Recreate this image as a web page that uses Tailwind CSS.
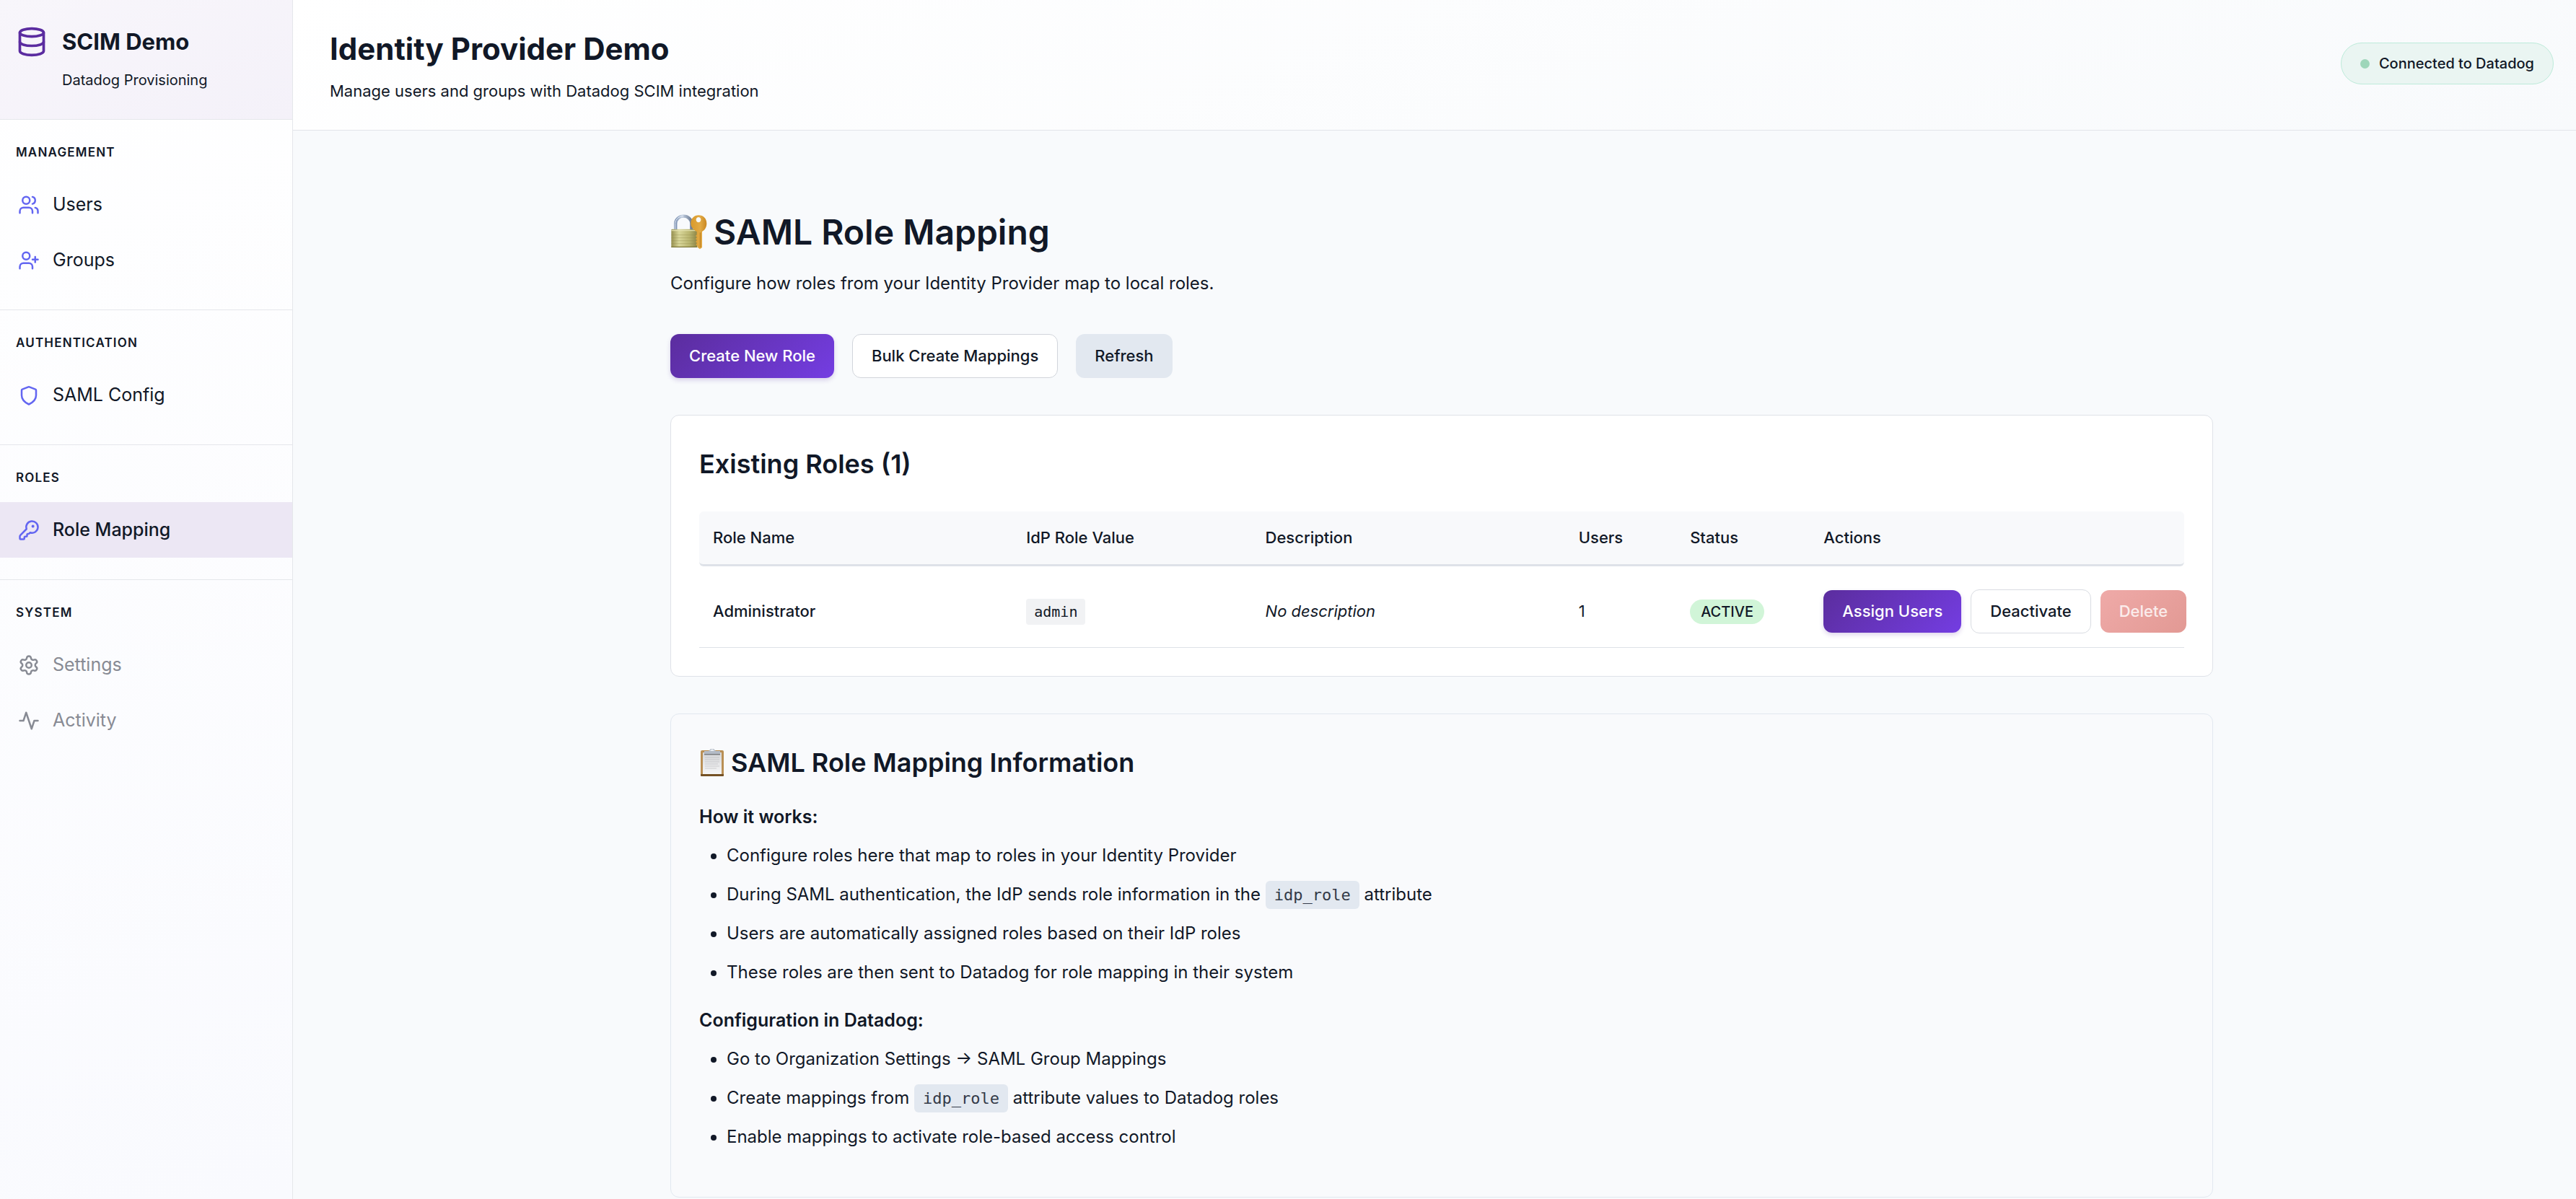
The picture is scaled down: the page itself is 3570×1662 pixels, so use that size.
<!DOCTYPE html>
<html lang="en">
<head>
<meta charset="utf-8">
<meta name="viewport" content="width=device-width, initial-scale=1">
<title>Identity Provider Demo</title>
<script src="https://cdn.jsdelivr.net/npm/@tailwindcss/browser@4"></script>
</head>
<body class="flex min-h-screen bg-[#f8fafc] font-[Inter,sans-serif] text-2xl text-[#111827]">

<aside class="w-[406px] shrink-0 border-r border-[#e5e7eb] bg-linear-160 from-white to-[#f9fafe]">
  <div class="grid grid-cols-[44px_1fr] gap-x-5 border-b border-[#e5e7eb] bg-linear-160 from-[#f8f6fb] to-[#f4f1f9] px-[22px] pt-9 pb-10">
    <svg class="size-11 text-[#5b2ca0]" viewBox="0 0 24 24" fill="none" stroke="currentColor" stroke-width="2" stroke-linecap="round" stroke-linejoin="round" aria-hidden="true"><ellipse cx="12" cy="5" rx="9" ry="3"/><path d="M3 5v14a9 3 0 0 0 18 0V5"/><path d="M3 12a9 3 0 0 0 18 0"/></svg>
    <div class="text-[31px] leading-[44px] font-bold">SCIM Demo</div>
    <div class="col-start-2 mt-[17px] text-xl">Datadog Provisioning</div>
  </div>

  <nav class="text-[25px]">
    <section class="border-b border-[#e5e7eb] pt-8 pb-[30px]">
      <h2 class="mb-[21px] px-[22px] text-[17px] leading-[26px] font-semibold tracking-[0.07em]">MANAGEMENT</h2>
      <a href="#users" class="flex h-[77px] items-center gap-[18px] px-[25px]">
        <svg class="size-[30px] text-[#6366f1]" viewBox="0 0 24 24" fill="none" stroke="currentColor" stroke-width="2" stroke-linecap="round" stroke-linejoin="round" aria-hidden="true"><path d="M16 21v-2a4 4 0 0 0-4-4H6a4 4 0 0 0-4 4v2"/><circle cx="9" cy="7" r="4"/><path d="M22 21v-2a4 4 0 0 0-3-3.87"/><path d="M16 3.13a4 4 0 0 1 0 7.75"/></svg>
        Users
      </a>
      <a href="#groups" class="flex h-[77px] items-center gap-[18px] px-[25px]">
        <svg class="size-[30px] text-[#6366f1]" viewBox="0 0 24 24" fill="none" stroke="currentColor" stroke-width="2" stroke-linecap="round" stroke-linejoin="round" aria-hidden="true"><path d="M16 21v-2a4 4 0 0 0-4-4H6a4 4 0 0 0-4 4v2"/><circle cx="9" cy="7" r="4"/><path d="M19 8v6"/><path d="M22 11h-6"/></svg>
        Groups
      </a>
    </section>

    <section class="border-b border-[#e5e7eb] pt-8 pb-[30px]">
      <h2 class="mb-[21px] px-[22px] text-[17px] leading-[26px] font-semibold tracking-[0.07em]">AUTHENTICATION</h2>
      <a href="#saml" class="flex h-[77px] items-center gap-[18px] px-[25px]">
        <svg class="size-[30px] text-[#6366f1]" viewBox="0 0 24 24" fill="none" stroke="currentColor" stroke-width="2" stroke-linecap="round" stroke-linejoin="round" aria-hidden="true"><path d="M20 12c0 5-3.8 8-8 10-4.200-2-8-5-8-10V6.300a1 1 0 0 1 .75-.97l6.700-2.650a1.500 1.500 0 0 1 1.100 0l6.700 2.650a1 1 0 0 1 .75.97z"/></svg>
        SAML Config
      </a>
    </section>

    <section class="border-b border-[#e5e7eb] pt-8 pb-[30px]">
      <h2 class="mb-[21px] px-[22px] text-[17px] leading-[26px] font-semibold tracking-[0.07em]">ROLES</h2>
      <a href="#roles" aria-current="page" class="flex h-[77px] items-center gap-[18px] bg-[#ece7f4] px-[25px] font-medium">
        <svg class="size-[30px] text-[#6366f1]" viewBox="0 0 24 24" fill="none" stroke="currentColor" stroke-width="2" stroke-linecap="round" stroke-linejoin="round" aria-hidden="true"><path d="M2.586 17.414A2 2 0 0 0 2 18.828V21a1 1 0 0 0 1 1h3a1 1 0 0 0 1-1v-1a1 1 0 0 1 1-1h1a1 1 0 0 0 1-1v-1a1 1 0 0 1 1-1h.172a2 2 0 0 0 1.414-.586l.814-.814a6.500 6.500 0 1 0-4-4z"/><circle cx="16.500" cy="7.500" r=".6" fill="currentColor"/></svg>
        Role Mapping
      </a>
    </section>

    <section class="pt-8 pb-[30px]">
      <h2 class="mb-[21px] px-[22px] text-[17px] leading-[26px] font-semibold tracking-[0.07em]">SYSTEM</h2>
      <a href="#settings" class="flex h-[77px] items-center gap-[18px] px-[25px] text-[#888b94]">
        <svg class="size-[30px]" viewBox="0 0 24 24" fill="none" stroke="currentColor" stroke-width="2" stroke-linecap="round" stroke-linejoin="round" aria-hidden="true"><path d="M9.671 4.136a2.340 2.340 0 0 1 4.659 0 2.340 2.340 0 0 0 3.319 1.915 2.340 2.340 0 0 1 2.330 4.033 2.340 2.340 0 0 0 0 3.831 2.340 2.340 0 0 1-2.330 4.033 2.340 2.340 0 0 0-3.319 1.915 2.340 2.340 0 0 1-4.659 0 2.340 2.340 0 0 0-3.320-1.915 2.340 2.340 0 0 1-2.330-4.033 2.340 2.340 0 0 0 0-3.831A2.340 2.340 0 0 1 6.350 6.051a2.340 2.340 0 0 0 3.319-1.915"/><circle cx="12" cy="12" r="3"/></svg>
        Settings
      </a>
      <a href="#activity" class="flex h-[77px] items-center gap-[18px] px-[25px] text-[#888b94]">
        <svg class="size-[30px]" viewBox="0 0 24 24" fill="none" stroke="currentColor" stroke-width="2" stroke-linecap="round" stroke-linejoin="round" aria-hidden="true"><path d="M22 12h-4l-3 9L9 3l-3 9H2"/></svg>
        Activity
      </a>
    </section>
  </nav>
</aside>

<div class="min-w-0 flex-1">
  <header class="flex items-center justify-between border-b border-[#e2e4ea] bg-linear-160 from-white to-[#f8fafc] pr-[31px] pl-[51px]">
    <div class="pt-10 pb-9">
      <h1 class="text-[42px] leading-[56px] font-bold">Identity Provider Demo</h1>
      <p class="mt-3 text-[22px] leading-9">Manage users and groups with Datadog SCIM integration</p>
    </div>
    <div class="mb-1 flex h-[58px] items-center gap-[13px] rounded-full border border-[#bdebda] bg-[#eaf5f2] px-[26px] text-xl font-medium">
      <span class="size-[13px] rounded-full bg-[#9ed6ba]"></span>
      Connected to Datadog
    </div>
  </header>

  <main class="mx-auto box-content max-w-[2138px] pt-[111px] pl-[20px]">
    <h2 class="flex items-center gap-2 text-5xl leading-[60px] font-semibold">
      <svg class="h-[50px] w-[52px]" viewBox="0 0 156 150" role="img" aria-label="Locked with key">
        <defs>
          <linearGradient id="brass" x1="0" x2="1"><stop offset="0" stop-color="#96904f"/><stop offset=".3" stop-color="#d9d79a"/><stop offset=".7" stop-color="#b9b56f"/><stop offset="1" stop-color="#8d8546"/></linearGradient>
          <linearGradient id="steel" x1="0" x2="1"><stop offset="0" stop-color="#7f94b4"/><stop offset=".4" stop-color="#c3d0e2"/><stop offset="1" stop-color="#6d7c94"/></linearGradient>
          <linearGradient id="gold" x1="0" x2="1"><stop offset="0" stop-color="#d99a2b"/><stop offset=".6" stop-color="#e2aa45"/><stop offset="1" stop-color="#c98722"/></linearGradient>
        </defs>
        <path d="M22 64V38a33 30 0 0 1 66 0v26" fill="none" stroke="url(#steel)" stroke-width="13"/>
        <path d="M20 64V38a35 32 0 0 1 35-31" fill="none" stroke="#e3eaf4" stroke-width="3"/>
        <rect x="4" y="62" width="108" height="76" rx="3" fill="url(#brass)"/>
        <path d="M4 68h108" stroke="#e8e6b8" stroke-width="3"/>
        <path d="M4 86h108M4 98h108M4 110h108M4 122h108" stroke="#8f8a4a" stroke-opacity=".35" stroke-width="3"/>
        <path d="M4 136h108" stroke="#7f7838" stroke-width="4"/>
        <path fill-rule="evenodd" fill="url(#gold)" d="M118 4c19 0 33 14 33 34 0 14-6 27-19 34v66l-9 7-9-7-2-7-6-5 5-6-6-6 6-6-6-6 6-6-6-6 5-5V72c-13-7-25-19-25-34C85 18 99 4 118 4zm-1 8a10 11 0 1 0 .1 0z"/>
        <path d="M124 76v62" stroke="#b87718" stroke-width="3"/>
      </svg>
      SAML Role Mapping
    </h2>
    <p class="mt-[21px] leading-10">Configure how roles from your Identity Provider map to local roles.</p>

    <div class="mt-[50px] flex gap-[25px] text-[22px] leading-[33px] font-medium">
      <button type="button" class="h-[61px] rounded-xl bg-linear-135 from-[#5b2d9e] to-[#743de2] px-[26px] text-white shadow-[0_3px_6px_rgba(91,45,158,0.2)]">Create New Role</button>
      <button type="button" class="h-[61px] rounded-xl border border-[#d1d5db] bg-white px-[26px]">Bulk Create Mappings</button>
      <button type="button" class="h-[61px] rounded-xl bg-[#e2e8f0] px-[26px]">Refresh</button>
    </div>

    <section class="mt-[51px] rounded-xl border border-[#dfe2e8] bg-white p-[39px]">
      <h3 class="mb-[38px] text-4xl leading-[56px] font-semibold">Existing Roles (1)</h3>
      <table class="w-full table-fixed border-separate border-spacing-0 text-left text-[22px] leading-[33px]">
        <colgroup>
          <col class="w-[21.1%]"><col class="w-[16.1%]"><col class="w-[21.1%]"><col class="w-[7.5%]"><col class="w-[9%]"><col>
        </colgroup>
        <thead>
          <tr class="h-[76px]">
            <th scope="col" class="rounded-l-md border-b-3 border-[#dee2e8] bg-[#f8f9fb] px-[19px] font-medium">Role Name</th>
            <th scope="col" class="border-b-3 border-[#dee2e8] bg-[#f8f9fb] px-[19px] font-medium">IdP Role Value</th>
            <th scope="col" class="border-b-3 border-[#dee2e8] bg-[#f8f9fb] px-[19px] font-medium">Description</th>
            <th scope="col" class="border-b-3 border-[#dee2e8] bg-[#f8f9fb] px-[19px] font-medium">Users</th>
            <th scope="col" class="border-b-3 border-[#dee2e8] bg-[#f8f9fb] px-[19px] font-medium">Status</th>
            <th scope="col" class="rounded-r-md border-b-3 border-[#dee2e8] bg-[#f8f9fb] px-[19px] font-medium">Actions</th>
          </tr>
        </thead>
        <tbody>
          <tr class="h-[113px]">
            <td class="border-b border-[#dee2e8] px-[19px] pt-3 font-medium">Administrator</td>
            <td class="border-b border-[#dee2e8] px-[19px] pt-3"><code class="rounded-sm bg-[#f1f2f4] px-[11px] py-[6px] font-['DejaVu_Sans_Mono',monospace] text-xl leading-none">admin</code></td>
            <td class="border-b border-[#dee2e8] px-[19px] pt-3 italic">No description</td>
            <td class="border-b border-[#dee2e8] px-[19px] pt-3">1</td>
            <td class="border-b border-[#dee2e8] px-[19px] pt-3"><span class="inline-block rounded-full bg-[#d1f5d8] px-[15px] py-px align-middle text-xl leading-8 font-medium">ACTIVE</span></td>
            <td class="border-b border-[#dee2e8] pt-3 pl-[19px]">
              <div class="flex items-center gap-[13px] font-medium">
                <button type="button" class="h-[59px] shrink-0 rounded-xl bg-linear-135 from-[#5b2d9e] to-[#743de2] px-[26px] text-white shadow-[0_3px_6px_rgba(91,45,158,0.2)]">Assign Users</button>
                <button type="button" class="h-[61px] shrink-0 rounded-xl border border-[#d9dce2] bg-white px-[26px]">Deactivate</button>
                <button type="button" disabled class="h-[59px] shrink-0 rounded-xl bg-linear-135 from-[#efaaa8] to-[#e29994] px-[26px] text-white/80">Delete</button>
              </div>
            </td>
          </tr>
        </tbody>
      </table>
    </section>

    <section class="mt-[51px] rounded-xl border border-[#e2e8f0] bg-[#f9fafc] px-[39px] pt-[39px] pb-14 leading-[54px]">
      <h3 class="mb-5 flex items-center gap-2 text-4xl leading-[56px] font-semibold">
        <svg class="h-10 w-9" viewBox="0 0 36 40" role="img" aria-label="Clipboard">
          <defs>
            <linearGradient id="paper" y1="0" x2="0" y2="1"><stop offset="0" stop-color="#d5d6d8"/><stop offset="1" stop-color="#f6f6f7"/></linearGradient>
          </defs>
          <rect x="2" y="3" width="32" height="36" rx="2" fill="#b98f55"/>
          <path d="M2 36h32v2a1 1 0 0 1-1 1H3a1 1 0 0 1-1-1z" fill="#755124"/>
          <rect x="5" y="6" width="26" height="30" fill="url(#paper)"/>
          <path d="M8 13h20M8 16h20M8 19h20M8 22h18M8 25h20M8 28h16" stroke="#b4b5b8" stroke-opacity=".55"/>
          <path d="M7 4h6l3-3h4l3 3h6v5H7z" fill="#b3bbc6"/>
          <path d="M7 8h22v1.500H7z" fill="#7b7d80"/>
          <path d="M15 4l2-2.500h2L21 4z" fill="#e9edf2"/>
        </svg>
        SAML Role Mapping Information
      </h3>
      <h4 class="text-[25px] leading-[54px] font-semibold">How it works:</h4>
      <ul class="mb-3 list-disc pl-[38px]">
        <li>Configure roles here that map to roles in your Identity Provider</li>
        <li>During SAML authentication, the IdP sends role information in the <code class="rounded-md bg-[#e2e8f0] px-3 py-[7px] font-['DejaVu_Sans_Mono',monospace] text-[22px] leading-none text-[#333a48]">idp_role</code> attribute</li>
        <li>Users are automatically assigned roles based on their IdP roles</li>
        <li>These roles are then sent to Datadog for role mapping in their system</li>
      </ul>
      <h4 class="text-[25px] leading-[54px] font-semibold">Configuration in Datadog:</h4>
      <ul class="list-disc pl-[38px]">
        <li>Go to Organization Settings → SAML Group Mappings</li>
        <li>Create mappings from <code class="rounded-md bg-[#e2e8f0] px-3 py-[7px] font-['DejaVu_Sans_Mono',monospace] text-[22px] leading-none text-[#333a48]">idp_role</code> attribute values to Datadog roles</li>
        <li>Enable mappings to activate role-based access control</li>
      </ul>
    </section>
  </main>
</div>
</body>
</html>
